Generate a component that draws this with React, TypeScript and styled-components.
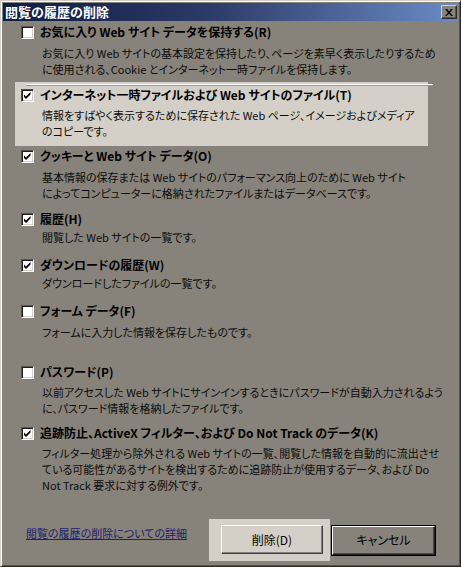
import React from 'react';
import styled, { createGlobalStyle } from 'styled-components';

const Global = createGlobalStyle`
  html, body { margin: 0; padding: 0; background: #87837b; }
  body {
    font-family: "Noto Sans CJK JP", "Noto Sans", sans-serif;
    font-feature-settings: "palt";
    color: #000;
  }
`;

const Window = styled.div`
  box-sizing: border-box;
  width: 461px;
  height: 567px;
  background: #87837b;
  border-style: solid;
  border-width: 1px;
  border-color: #d4d0c8 #2b2a27 #2b2a27 #d4d0c8;
  box-shadow: inset 1px 1px 0 #ffffff, inset -1px -1px 0 #56534d;
  padding: 2px 3px 2px 2px;
  display: flex;
  flex-direction: column;
`;

const TitleBar = styled.div`
  height: 18px;
  flex: none;
  display: flex;
  align-items: center;
  justify-content: space-between;
  padding: 0 0 0 2px;
  background: linear-gradient(to right, #0f1c44 0%, #2b3a66 45%, #6a8bc6 100%);
`;

const TitleText = styled.span`
  color: #fff;
  font-size: 13px;
  font-weight: 700;
  line-height: 18px;
  font-feature-settings: normal;
`;

const CloseBtn = styled.div`
  box-sizing: border-box;
  width: 16px;
  height: 14px;
  background: #87837b;
  border-style: solid;
  border-width: 1px;
  border-color: #d4d0c8 #2b2a27 #2b2a27 #d4d0c8;
  box-shadow: inset -1px -1px 0 #56534d;
  display: flex;
  align-items: center;
  justify-content: center;
`;

const Body = styled.div`
  padding-left: 12px;
  display: flex;
  flex-direction: column;
`;

const Option = styled.div<{ $mt: number; $hl?: boolean }>`
  position: relative;
  margin-top: ${p => p.$mt}px;
  padding: ${p => (p.$hl ? '5px 0 7px 6px' : '0 0 0 6px')};
  width: ${p => (p.$hl ? '413px' : 'auto')};
  box-sizing: border-box;
  background: ${p => (p.$hl ? '#d4d0c8' : 'transparent')};
  ${p =>
    p.$hl
      ? `&::before {
    content: '';
    position: absolute;
    left: 11px;
    top: 2px;
    width: 407px;
    height: 1px;
    background: #ffffff;
    box-shadow: 0 1px 0 #9a968e;
  }`
      : ''}
`;

const LabelRow = styled.div`
  display: flex;
  align-items: center;
  height: 16px;
  gap: 6px;
`;

const Box = styled.span`
  box-sizing: border-box;
  width: 13px;
  height: 13px;
  flex: none;
  background: #fff;
  border-style: solid;
  border-width: 1px;
  border-color: #55524c #ffffff #ffffff #55524c;
  box-shadow: inset 1px 1px 0 #1e1e1e, inset -1px -1px 0 #d4d0c8;
  display: flex;
  align-items: center;
  justify-content: center;
`;

const Label = styled.span`
  font-size: 12px;
  font-weight: 700;
  line-height: 16px;
  white-space: nowrap;
`;

const Desc = styled.div<{ $dg: number }>`
  margin-top: ${p => p.$dg}px;
  padding-left: 21px;
  font-size: 11px;
  line-height: 16px;
  white-space: nowrap;
  color: #0c0c0a;
`;

const Footer = styled.div`
  margin-top: 26px;
  display: flex;
  align-items: center;
  padding: 0 21px 0 23px;
`;

const Link = styled.a`
  align-self: flex-start;
  margin-top: 6px;
  font-size: 11px;
  line-height: 16px;
  color: #22206c;
  text-decoration: underline;
  white-space: nowrap;
`;

const BtnGroup = styled.div`
  margin-left: auto;
  display: flex;
  align-items: center;
  gap: 1px;
`;

const HlBox = styled.div`
  background: #d4d0c8;
  padding: 6px 7px 7px 12px;
`;

const Button = styled.div<{ $face: string }>`
  box-sizing: border-box;
  width: ${p => (p.$face === 'light' ? '102px' : '103px')};
  height: 29px;
  display: flex;
  align-items: center;
  justify-content: center;
  font-size: 12px;
  line-height: 16px;
  background: ${p => (p.$face === 'light' ? '#d4d0c8' : '#87837b')};
  border-style: solid;
  border-width: 1px;
  border-color: ${p =>
    p.$face === 'light'
      ? '#ffffff #404040 #404040 #ffffff'
      : '#ffffff #1e1e1e #1e1e1e #ffffff'};
  box-shadow: inset -1px -1px 0 ${p => (p.$face === 'light' ? '#808080' : '#4e4b45')};
`;

const DefaultFrame = styled.div`
  border: 1px solid #000;
  display: flex;
`;

const Check = () => (
  <svg width="9" height="9" viewBox="0 0 9 9">
    <path d="M1 3.5 L3 5.5 L7.5 1 L7.5 3.5 L3 8 L1 6 Z" fill="#000" />
  </svg>
);

type Item = {
  label: string;
  lines: string[];
  checked: boolean;
  mt: number;
  dg: number;
  hl?: boolean;
};

const items: Item[] = [
  {
    label: 'お気に入り Web サイト データを保持する(R)',
    lines: [
      'お気に入り Web サイトの基本設定を保持したり、ページを素早く表示したりするため',
      'に使用される、Cookie とインターネット一時ファイルを保持します。',
    ],
    checked: false,
    mt: 3,
    dg: 5,
  },
  {
    label: 'インターネット一時ファイルおよび Web サイトのファイル(T)',
    lines: ['情報をすばやく表示するために保存された Web ページ、イメージおよびメディア', 'のコピーです。'],
    checked: true,
    mt: 5,
    dg: 4,
    hl: true,
  },
  {
    label: 'クッキーと Web サイト データ(O)',
    lines: [
      '基本情報の保存または Web サイトのパフォーマンス向上のために Web サイト',
      'によってコンピューターに格納されたファイルまたはデータベースです。',
    ],
    checked: true,
    mt: 2,
    dg: 5,
  },
  { label: '履歴(H)', lines: ['閲覧した Web サイトの一覧です。'], checked: true, mt: 10, dg: 2 },
  { label: 'ダウンロードの履歴(W)', lines: ['ダウンロードしたファイルの一覧です。'], checked: true, mt: 12, dg: 2 },
  { label: 'フォーム データ(F)', lines: ['フォームに入力した情報を保存したものです。'], checked: false, mt: 12, dg: 5 },
  {
    label: 'パスワード(P)',
    lines: [
      '以前アクセスした Web サイトにサインインするときにパスワードが自動入力されるよう',
      'に、パスワード情報を格納したファイルです。',
    ],
    checked: false,
    mt: 24,
    dg: 4,
  },
  {
    label: '追跡防止、ActiveX フィルター、および Do Not Track のデータ(K)',
    lines: [
      'フィルター処理から除外される Web サイトの一覧、閲覧した情報を自動的に流出させ',
      'ている可能性があるサイトを検出するために追跡防止が使用するデータ、および Do',
      'Not Track 要求に対する例外です。',
    ],
    checked: true,
    mt: 9,
    dg: 4,
  },
];

export default function App() {
  return (
    <>
      <Global />
      <Window>
        <TitleBar>
          <TitleText>閲覧の履歴の削除</TitleText>
          <CloseBtn>
            <svg width="8" height="7" viewBox="0 0 8 7">
              <path d="M0 0 L2 0 L4 2.5 L6 0 L8 0 L5 3.5 L8 7 L6 7 L4 4.5 L2 7 L0 7 L3 3.5 Z" fill="#000" />
            </svg>
          </CloseBtn>
        </TitleBar>
        <Body>
          {items.map((it, i) => (
            <Option key={i} $mt={it.mt} $hl={it.hl}>
              <LabelRow>
                <Box>{it.checked ? <Check /> : null}</Box>
                <Label>{it.label}</Label>
              </LabelRow>
              <Desc $dg={it.dg}>
                {it.lines.map((l, j) => (
                  <div key={j}>{l}</div>
                ))}
              </Desc>
            </Option>
          ))}
        </Body>
        <Footer>
          <Link href="#">閲覧の履歴の削除についての詳細</Link>
          <BtnGroup>
            <HlBox>
              <Button $face="light">削除(D)</Button>
            </HlBox>
            <DefaultFrame>
              <Button $face="dark">キャンセル</Button>
            </DefaultFrame>
          </BtnGroup>
        </Footer>
      </Window>
    </>
  );
}
